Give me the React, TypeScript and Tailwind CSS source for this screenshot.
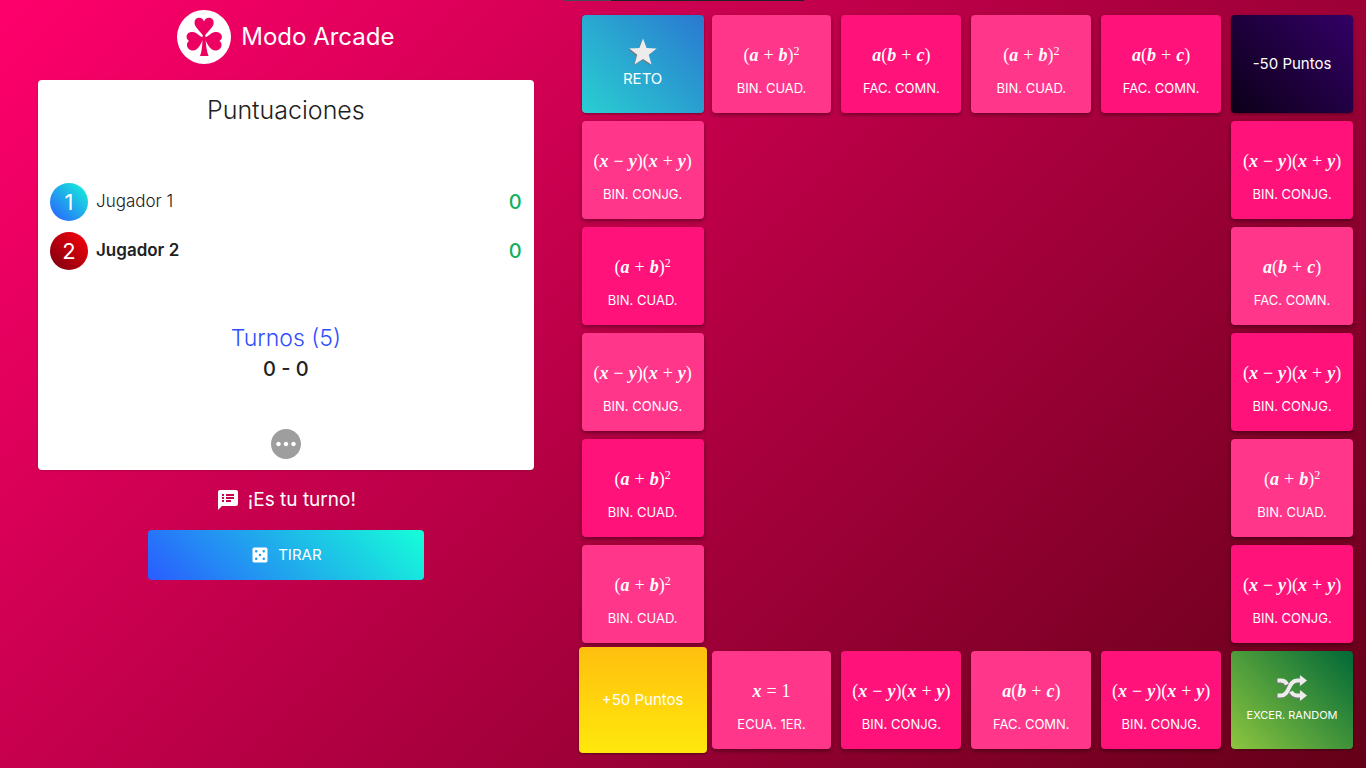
import type { ReactNode } from 'react';
import { MdCasino, MdPending, MdSpeakerNotes } from 'react-icons/md';

type Kind = 'square' | 'conj' | 'factor' | 'linear';

const V = ({ children }: { children: ReactNode }) => <i className="font-bold">{children}</i>;
const Op = ({ children }: { children: ReactNode }) => <span className="mx-[5px]">{children}</span>;

const formulas: Record<Kind, { label: string; math: ReactNode }> = {
  square: {
    label: 'BIN. CUAD.',
    math: <>(<V>a</V><Op>+</Op><V>b</V>)<sup className="text-xs">2</sup></>,
  },
  conj: {
    label: 'BIN. CONJG.',
    math: <>(<V>x</V><Op>−</Op><V>y</V>)(<V>x</V><Op>+</Op><V>y</V>)</>,
  },
  factor: {
    label: 'FAC. COMN.',
    math: <><V>a</V>(<V>b</V><Op>+</Op><V>c</V>)</>,
  },
  linear: {
    label: 'ECUA. 1ER.',
    math: <><V>x</V><Op>=</Op>1</>,
  },
};

function Clover() {
  return (
    <svg viewBox="0 0 54 54" className="size-[54px]" fill="currentColor" aria-hidden="true">
      <path d="M27 28C25 22 17.500 18 17.500 12.800C17.500 9.500 19.600 7.800 22 7.800C24.500 7.800 26.300 9.300 27 11.500C27.700 9.300 29.500 7.800 32 7.800C34.600 7.800 36.700 9.500 36.700 12.800C36.700 18 29 22 27 28Z" />
      <path d="M27 27.500C23 27.500 20 22 15.500 22C11.800 22 9.600 24 9.600 26.800C9.600 28.800 10.600 30.300 12.200 31C10.500 32 9.800 33.300 10 35.500C10.300 38.300 12.700 40.500 15.800 40.500C22 40.500 24 33 27 27.500Z" />
      <path d="M27 27.500C31 27.500 34 22 38.500 22C42.200 22 44.900 24 44.900 26.800C44.900 28.800 43.900 30.300 42.300 31C44 32 44.700 33.300 44.500 35.500C44.200 38.300 41.800 40.500 38.700 40.500C32.500 40.500 30 33 27 27.500Z" />
      <path d="M25.500 26H28.500C28.700 34 29.500 41 31.600 46H23C25 41 25.500 34 25.500 26Z" />
    </svg>
  );
}

function Star() {
  return (
    <svg viewBox="0 0 28 28" className="my-px size-7 text-[#ececec] drop-shadow-[-1px_1px_0_#777]" fill="currentColor" aria-hidden="true">
      <path d="M14 .5L17.600 10L27.700 10.400L19.800 16.700L22.500 26.500L14 21L5.500 26.500L8.200 16.700L.3 10.400L10.400 10Z" />
    </svg>
  );
}

function Shuffle() {
  return (
    <svg viewBox="0 0 30 26" className="mb-1 h-[26px] w-[30px] text-[#ececec] drop-shadow-[-1px_1px_0_#777]" fill="currentColor" aria-hidden="true">
      <g fill="none" stroke="currentColor" strokeWidth="4">
        <path d="M.5 20.500H4C13 20.500 11 5.500 20 5.500H24" />
        <path d="M.5 5.500H4C7 5.500 9 7 10 9.500" />
        <path d="M14 16.500C15.200 19 17 20.500 20 20.500H24" />
      </g>
      <path d="M23 0L30 5.500L23 11Z" />
      <path d="M23 15L30 20.500L23 26Z" />
    </svg>
  );
}

function Cell({ kind, light = false, inner = false }: { kind: Kind; light?: boolean; inner?: boolean }) {
  const { label, math } = formulas[kind];
  return (
    <div
      className={`flex flex-col items-center justify-center gap-[11px] rounded pt-3 text-white shadow-[0_2px_4px_rgba(0,0,0,0.4)] ${light ? 'bg-[#ff368a]' : 'bg-[#ff1279]'} ${inner ? 'mr-0.5' : ''}`}
    >
      <div className="whitespace-nowrap font-['Liberation_Serif',serif] text-lg leading-6">{math}</div>
      <div className="whitespace-nowrap text-[13px] leading-5">{label}</div>
    </div>
  );
}

function Corner({ className, children }: { className: string; children: ReactNode }) {
  return (
    <div className={`flex flex-col items-center justify-center rounded text-white shadow-[0_1px_3px_rgba(0,0,0,0.4)] ${className}`}>
      {children}
    </div>
  );
}

function Player({ number, badge, active = false }: { number: number; badge: string; active?: boolean }) {
  return (
    <li className="flex items-center gap-2">
      <span className={`flex size-[38px] items-center justify-center rounded-full text-[22px] text-white ${badge}`}>{number}</span>
      <span className={`text-[17px] ${active ? 'font-semibold' : 'font-light'}`}>Jugador {number}</span>
      <span className="ml-auto text-xl font-medium text-[#12b060]">0</span>
    </li>
  );
}

const sides: { left: Kind; leftLight: boolean; right: Kind; rightLight: boolean }[] = [
  { left: 'conj', leftLight: true, right: 'conj', rightLight: false },
  { left: 'square', leftLight: false, right: 'factor', rightLight: true },
  { left: 'conj', leftLight: true, right: 'conj', rightLight: false },
  { left: 'square', leftLight: false, right: 'square', rightLight: true },
  { left: 'square', leftLight: true, right: 'conj', rightLight: false },
];

export default function App() {
  return (
    <main className="relative flex min-h-screen bg-linear-135/srgb from-[#ff006c] to-[#640018] font-['Inter',sans-serif] text-[#212121]">
      <div className="absolute left-[563px] top-0 flex h-px w-[241px] bg-[#202124]">
        <div className="w-12 bg-[#4a4a55]" />
      </div>

      <section className="flex w-[42%] flex-col items-center pt-2.5 pr-10 pl-[38px]">
        <header className="flex items-center gap-2.5 text-white">
          <span className="flex size-[54px] items-center justify-center rounded-full bg-white text-[#ec0062]">
            <Clover />
          </span>
          <h1 className="text-2xl">Modo Arcade</h1>
        </header>

        <div className="mt-4 flex w-full flex-col items-center rounded bg-white px-3 pt-3 pb-2 shadow">
          <h2 className="text-[25px] font-light leading-9">Puntuaciones</h2>
          <ul className="mt-[55px] flex w-full flex-col gap-[11px]">
            <Player number={1} badge="bg-linear-45/srgb from-[#2a5cff] to-[#15f8d8]" />
            <Player number={2} badge="bg-linear-45/srgb from-[#760010] to-[#ff000c]" active />
          </ul>
          <h3 className="mt-[52px] text-[23px] font-light leading-8 text-[#304ffe]">Turnos (5)</h3>
          <p className="text-xl font-medium leading-[30px]">0 - 0</p>
          <button type="button" aria-label="Más opciones" className="mt-[42px] text-[#9e9e9e]">
            <MdPending size={36} />
          </button>
        </div>

        <p className="mt-4 flex items-center gap-2 text-[19px] leading-7 text-white">
          <MdSpeakerNotes size={24} />
          ¡Es tu turno!
        </p>
        <button
          type="button"
          className="mt-4 flex h-[50px] w-[276px] items-center justify-center gap-2 rounded bg-linear-45/srgb from-[#2a5cff] to-[#15ffd8] text-[15px] text-white"
        >
          <MdCasino size={20} />
          TIRAR
        </button>
      </section>

      <section className="grid flex-1 auto-rows-[98px] grid-cols-6 gap-2 pt-[15px] pr-[13px] pl-2">
        <Corner className="bg-linear-45/srgb from-[#29cfd2] to-[#2a78d0]">
          <Star />
          <span className="text-[15px] leading-6">RETO</span>
        </Corner>
        <Cell kind="square" light inner />
        <Cell kind="factor" inner />
        <Cell kind="square" light inner />
        <Cell kind="factor" inner />
        <Corner className="bg-linear-45/srgb from-[#0c0018] to-[#330066]">
          <span className="text-[15px]">-50 Puntos</span>
        </Corner>

        {sides.map(({ left, leftLight, right, rightLight }, row) => (
          <div key={row} className="col-span-6 grid grid-cols-6 gap-2">
            <Cell kind={left} light={leftLight} />
            <div className="col-span-4" />
            <Cell kind={right} light={rightLight} />
          </div>
        ))}

        <Corner className="-mx-[3px] -my-1 bg-linear-to-b/srgb from-[#ffbf0f] to-[#ffe80c]">
          <span className="text-[15px]">+50 Puntos</span>
        </Corner>
        <Cell kind="linear" light inner />
        <Cell kind="conj" inner />
        <Cell kind="factor" light inner />
        <Cell kind="conj" inner />
        <Corner className="bg-linear-45/srgb from-[#8dc63f] to-[#006837]">
          <Shuffle />
          <span className="text-[11px] leading-5">EXCER. RANDOM</span>
        </Corner>
      </section>
    </main>
  );
}
